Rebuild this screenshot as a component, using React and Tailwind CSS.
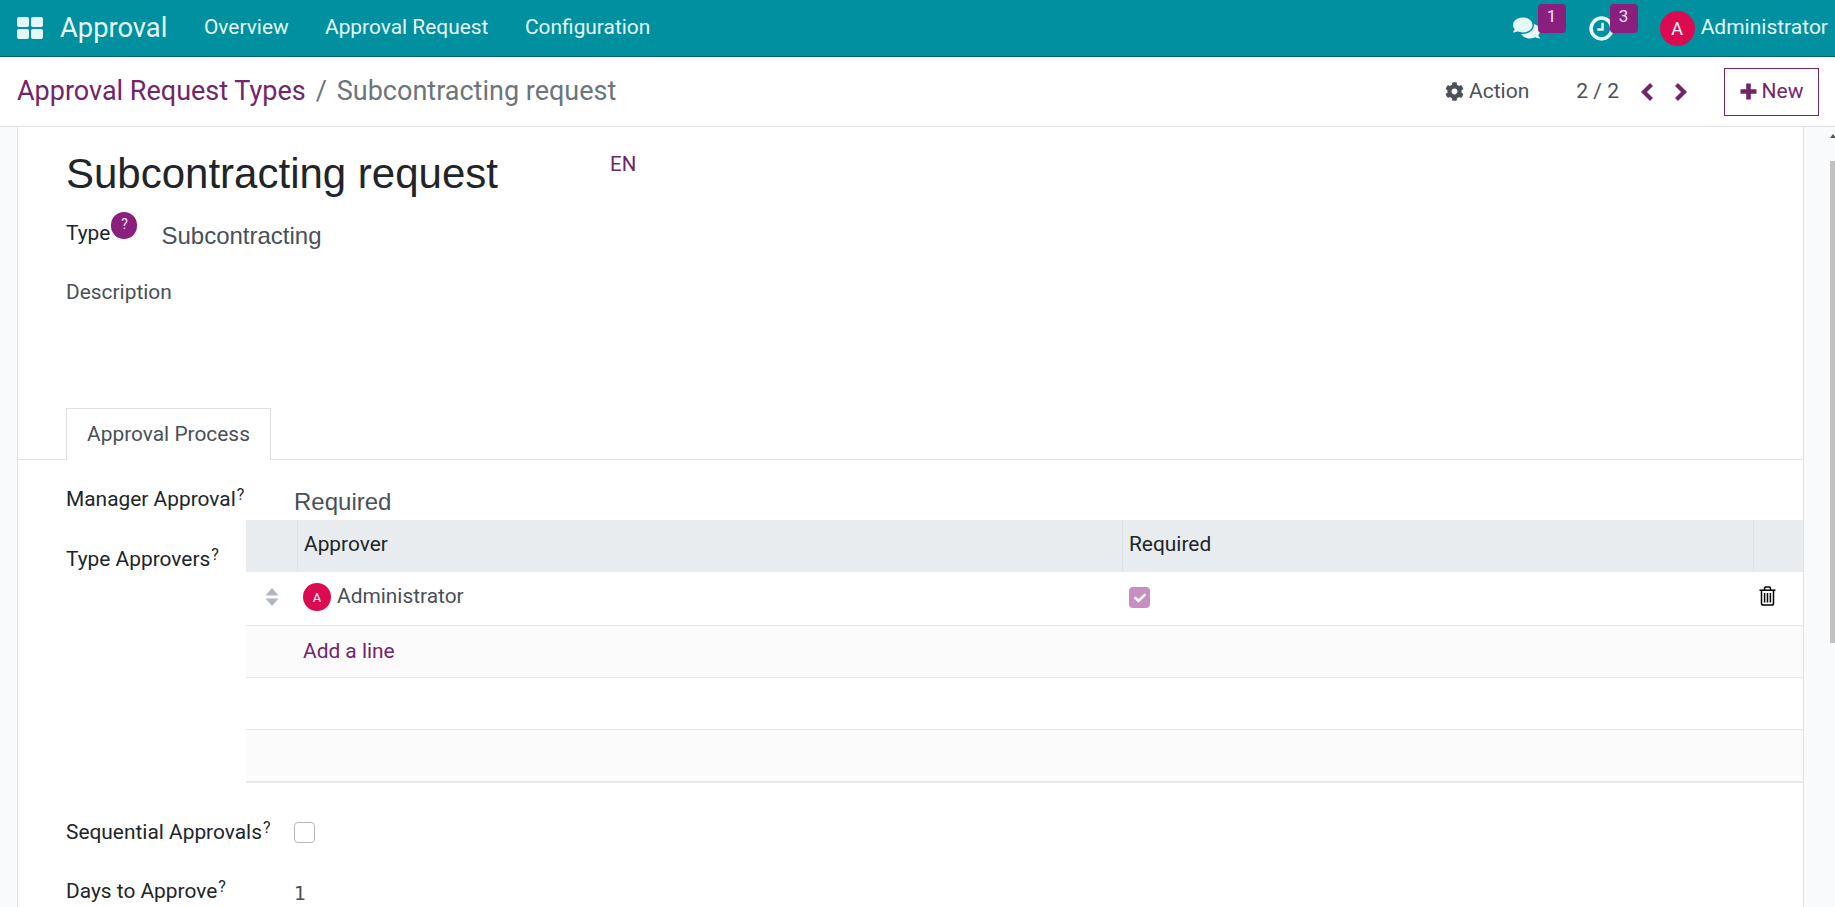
import React from "react";
import { FaComments, FaCog, FaCheck } from "react-icons/fa";

const Sup = () => <sup className="text-[16px] ml-[1px] relative -top-[6px] text-[#212529] leading-none align-baseline">?</sup>;

const Apps = () => (
  <svg width="26" height="22" viewBox="0 0 26 22" fill="#e6f7f8">
    <rect x="0" y="0" width="12" height="10" rx="2" />
    <rect x="14" y="0" width="12" height="10" rx="2" />
    <rect x="0" y="12" width="12" height="10" rx="2" />
    <rect x="14" y="12" width="12" height="10" rx="2" />
  </svg>
);

const Sort = () => (
  <svg width="14" height="18" viewBox="0 0 14 18" fill="#aeb6bf">
    <path d="M7 0 L13.5 7.5 H0.5 Z" />
    <path d="M7 18 L13.5 10.5 H0.5 Z" />
  </svg>
);

const Clock = () => (
  <svg width="25" height="25" viewBox="0 0 24 24" fill="none" stroke="#e6f7f8">
    <circle cx="12" cy="12" r="10" strokeWidth="3.4" />
    <path d="M13 6.5 V13 H8" strokeWidth="2.4" />
  </svg>
);

const Trash = () => (
  <svg width="17" height="20" viewBox="0 0 17 20" fill="none" stroke="#000" strokeWidth="1.5">
    <path d="M5.5 4 V2.4 Q5.5 1 7 1 H10 Q11.5 1 11.5 2.4 V4" />
    <path d="M0.5 4.2 H16.5" />
    <path d="M2.5 4.2 V17.2 Q2.5 19 4.2 19 H12.8 Q14.5 19 14.5 17.2 V4.2" />
    <path d="M5.6 7 V16.5 M8.5 7 V16.5 M11.4 7 V16.5" />
  </svg>
);

const Chevron = ({ dir, className }) => (
  <svg width="14" height="18" viewBox="0 0 14 18" fill="none" stroke="#71256b" strokeWidth="4.2" className={className}>
    <path d={dir === "left" ? "M11.5 1.5 L4 9 L11.5 16.5" : "M2.5 1.5 L10 9 L2.5 16.5"} />
  </svg>
);

const Plus = () => (
  <svg width="17" height="17" viewBox="0 0 17 17" fill="#71256b">
    <path d="M6.2 0.5 H10.8 V6.2 H16.5 V10.8 H10.8 V16.5 H6.2 V10.8 H0.5 V6.2 H6.2 Z" />
  </svg>
);

const Badge = ({ left, children }) => (
  <span className={`absolute top-[4px] w-[28px] h-[29px] rounded-[4px] bg-[#8a1f80] text-[#f3e3f1] text-[17px] leading-[24px] text-center ${left}`}>{children}</span>
);

export default function App() {
  return (
    <div className="w-[1835px] h-[907px] overflow-hidden flex flex-col bg-white font-['Roboto',sans-serif]">
      <header className="h-[57px] shrink-0 flex items-center bg-[#00909f] border-b border-[#04606b] text-[#e6f7f8]">
        <div className="ml-[17px] flex items-center"><Apps /></div>
        <span className="ml-[17px] text-[27.3px] w-[144px]">Approval</span>
        <nav className="flex text-[20.9px]">
          <span className="w-[121px]">Overview</span>
          <span className="w-[200px]">Approval Request</span>
          <span>Configuration</span>
        </nav>
        <div className="ml-auto flex items-center h-full">
          <div className="relative h-full w-[76px] flex items-center"><FaComments className="w-[27px] h-[24px]" /><Badge left="left-[25px]">1</Badge></div>
          <div className="relative h-full w-[71px] flex items-center"><Clock /><Badge left="left-[21px]">3</Badge></div>
          <span className="w-[35px] h-[35px] rounded-full bg-[#dc0a50] flex items-center justify-center text-[18px]">A</span>
          <span className="ml-[6px] mr-[7px] text-[21px]">Administrator</span>
        </div>
      </header>

      <div className="h-[70px] shrink-0 flex items-center border-b border-[#dee2e6] text-[#4b5158]">
        <div className="ml-[17px] pb-[1px] flex items-center text-[27px]">
          <span className="text-[#71256b]">Approval Request Types</span>
          <span className="ml-[10px] text-[#6c757d]">/</span>
          <span className="ml-[10px] text-[#6c757d]">Subcontracting request</span>
        </div>
        <div className="ml-auto flex items-center text-[21px]">
          <FaCog className="w-[19px] h-[19px]" />
          <span className="ml-[5px]">Action</span>
          <span className="ml-[47px]">2 / 2</span>
          <Chevron dir="left" className="ml-[21px]" />
          <Chevron dir="right" className="ml-[20px]" />
          <div className="ml-[36px] mr-[16px] w-[95px] h-[48px] border-[1.5px] border-[#71256b] flex items-center justify-center text-[#71256b]">
            <Plus />
            <span className="ml-[5px]">New</span>
          </div>
        </div>
      </div>

      <div className="flex-1 flex min-h-0">
        <div className="w-[18px] shrink-0 bg-[#f9fafb] border-r border-[#dee2e6]" />
        <main className="flex-1 min-w-0 text-[#212529] text-[20.9px]">
          <div className="mt-[17px] h-[60px] pl-[48px] flex items-start">
            <h1 className="w-[544px] text-[42px] leading-[60px] font-['Liberation_Sans',sans-serif] text-[#212529]">Subcontracting request</h1>
            <span className="mt-[8px] text-[#71256b] text-[20.5px] leading-[24px]">EN</span>
          </div>
          <div className="mt-[8px] h-[40px] pl-[48px] flex items-start">
            <span className="mt-[9px] leading-[24px]">Type</span>
            <span className="w-[26px] h-[27px] rounded-full bg-[#8a1f80] text-[#f3e3f1] text-[14px] leading-[24px] text-center ml-[1px]">?</span>
            <span className="ml-[24px] mt-[10px] text-[24px] leading-[28px] text-[#495057] font-['Liberation_Sans',sans-serif]">Subcontracting</span>
          </div>
          <div className="mt-[28px] pl-[48px] leading-[24px] text-[#495057]">Description</div>

          <div className="mt-[104px] border-b border-[#dee2e6] pl-[48px] h-[52px] flex">
            <div className="w-[205px] h-[52px] border border-b-0 border-[#dee2e6] bg-white text-[#495057] flex items-center justify-center">Approval Process</div>
          </div>

          <div className="flex h-[60px]">
            <div className="w-[228px] shrink-0 pl-[48px] pt-[27px] leading-[24px] whitespace-nowrap">Manager Approval<Sup /></div>
            <div className="pl-[48px] pt-[28px] text-[24px] leading-[28px] text-[#495057] font-['Liberation_Sans',sans-serif]">Required</div>
          </div>

          <div className="flex">
            <div className="w-[228px] shrink-0 pl-[48px] pt-[27px] leading-[24px] whitespace-nowrap">Type Approvers<Sup /></div>
            <div className="flex-1 min-w-0">
              <div className="grid grid-cols-[51px_825px_631px_1fr] h-[52px] bg-[#e9ecef] items-stretch">
                <div />
                <div className="border-l border-[#dee2e6] pl-[6px] pb-[2px] flex items-center">Approver</div>
                <div className="border-l border-[#dee2e6] pl-[6px] pb-[2px] flex items-center">Required</div>
                <div className="border-l border-[#dee2e6]" />
              </div>
              <div className="grid grid-cols-[51px_825px_631px_1fr] h-[54px] border-b border-[#e5e7eb] items-center pb-[2px]">
                <div className="pl-[19px] flex relative -top-[1px]"><Sort /></div>
                <div className="pl-[6px] flex items-center">
                  <span className="w-[28px] h-[28px] rounded-full bg-[#dc0a50] text-white text-[13px] flex items-center justify-center">A</span>
                  <span className="ml-[6px] text-[#495057] relative -top-[1px]">Administrator</span>
                </div>
                <div className="pl-[7px] flex">
                  <span className="w-[21px] h-[21px] rounded-[4px] bg-[#c78fc1] flex items-center justify-center"><FaCheck className="w-[12px] h-[12px] text-white" /></span>
                </div>
                <div className="pl-[6px] flex relative -top-[2px]"><Trash /></div>
              </div>
              <div className="h-[52px] bg-[#fbfbfb] border-b border-[#e5e7eb] pl-[57px] flex items-center text-[#71256b]">Add a line</div>
              <div className="h-[52px] border-b border-[#e5e7eb]" />
              <div className="h-[53px] bg-[#fbfbfb] border-b-2 border-[#e5e7eb]" />
            </div>
          </div>

          <div className="mt-[38px] h-[24px] pl-[48px] flex items-center">
            <span className="w-[228px] whitespace-nowrap">Sequential Approvals<Sup /></span>
            <span className="w-[21px] h-[21px] rounded-[4px] border border-[#b5bac0] bg-white relative -top-[1px]" />
          </div>
          <div className="mt-[35px] pl-[48px] flex items-center h-[24px]">
            <span className="w-[228px] whitespace-nowrap">Days to Approve<Sup /></span>
            <span className="text-[#495057] text-[19px] font-['DejaVu_Sans',sans-serif] relative top-[1px]">1</span>
          </div>
          <div className="mt-[3px] w-[312px] h-[1px] bg-[#dee2e6]" />
        </main>
        <div className="w-[32px] shrink-0 bg-[#f9fafb] border-l border-[#dee2e6] flex justify-end">
          <div className="w-[5px] flex flex-col items-center">
            <div className="mt-[7px] w-0 h-0 border-x-[3px] border-x-transparent border-b-[4px] border-b-[#555]" />
            <div className="mt-[23px] w-[5px] h-[482px] bg-[#c1c1c1]" />
          </div>
        </div>
      </div>
    </div>
  );
}
